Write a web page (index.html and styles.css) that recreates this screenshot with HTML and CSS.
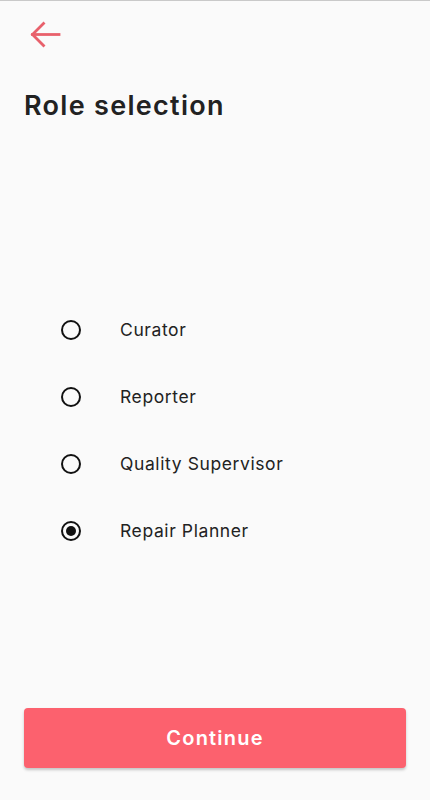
FILE: index.html
```html
<!DOCTYPE html>
<html lang="en">
<head>
<meta charset="utf-8">
<title>Role selection</title>
<link rel="stylesheet" href="styles.css">
</head>
<body>
<div class="screen">
  <div class="topbar">
    <button class="back" aria-label="Back">
      <svg width="32" height="28" viewBox="0 0 32 28" fill="none" stroke="#e8606b" stroke-width="2.8" stroke-linecap="square">
        <path d="M2.5 13.5 H29"/>
        <path d="M13.5 2.5 L2.5 13.5 L13.5 24.5"/>
      </svg>
    </button>
  </div>
  <h1 class="title">Role selection</h1>
  <ul class="options">
    <li class="option"><span class="radio"></span><span class="label">Curator</span></li>
    <li class="option"><span class="radio"></span><span class="label">Reporter</span></li>
    <li class="option"><span class="radio"></span><span class="label">Quality Supervisor</span></li>
    <li class="option"><span class="radio checked"></span><span class="label">Repair Planner</span></li>
  </ul>
  <button class="continue">Continue</button>
</div>
</body>
</html>
```
FILE: styles.css
```css
html, body {
  margin: 0;
  padding: 0;
  background: #fafafa;
}
.screen {
  height: 800px;
  box-sizing: border-box;
  border-top: 1px solid #c9c9c9;
  display: flex;
  flex-direction: column;
  font-family: Inter, "Noto Sans", sans-serif;
  color: #212121;
}
.topbar {
  height: 68px;
  display: flex;
  align-items: center;
  padding-left: 30px;
}
.back {
  border: 0;
  background: none;
  padding: 0;
  display: flex;
}
.title {
  margin: 21px 24px 0;
  font-size: 27px;
  line-height: 32px;
  font-weight: 600;
  color: #222;
  letter-spacing: 1.3px;
}
.options {
  list-style: none;
  margin: 174px 0 0;
  padding: 0 0 0 61px;
}
.option {
  height: 67px;
  display: flex;
  align-items: center;
}
.radio {
  width: 20px;
  height: 20px;
  box-sizing: border-box;
  border: 2px solid #111;
  border-radius: 50%;
  display: flex;
  align-items: center;
  justify-content: center;
}
.radio.checked::after {
  content: "";
  width: 10px;
  height: 10px;
  border-radius: 50%;
  background: #111;
}
.label {
  margin-left: 39px;
  font-size: 17.5px;
  color: #222;
  letter-spacing: 0.6px;
}
.continue {
  margin: auto 24px 32px;
  height: 60px;
  border: 0;
  border-radius: 4px;
  background: #fc616e;
  color: #fff;
  font-family: Inter, "Noto Sans", sans-serif;
  font-size: 20px;
  font-weight: 600;
  letter-spacing: 1.2px;
  box-shadow: 0 2px 3px rgba(0,0,0,0.22);
}
```
